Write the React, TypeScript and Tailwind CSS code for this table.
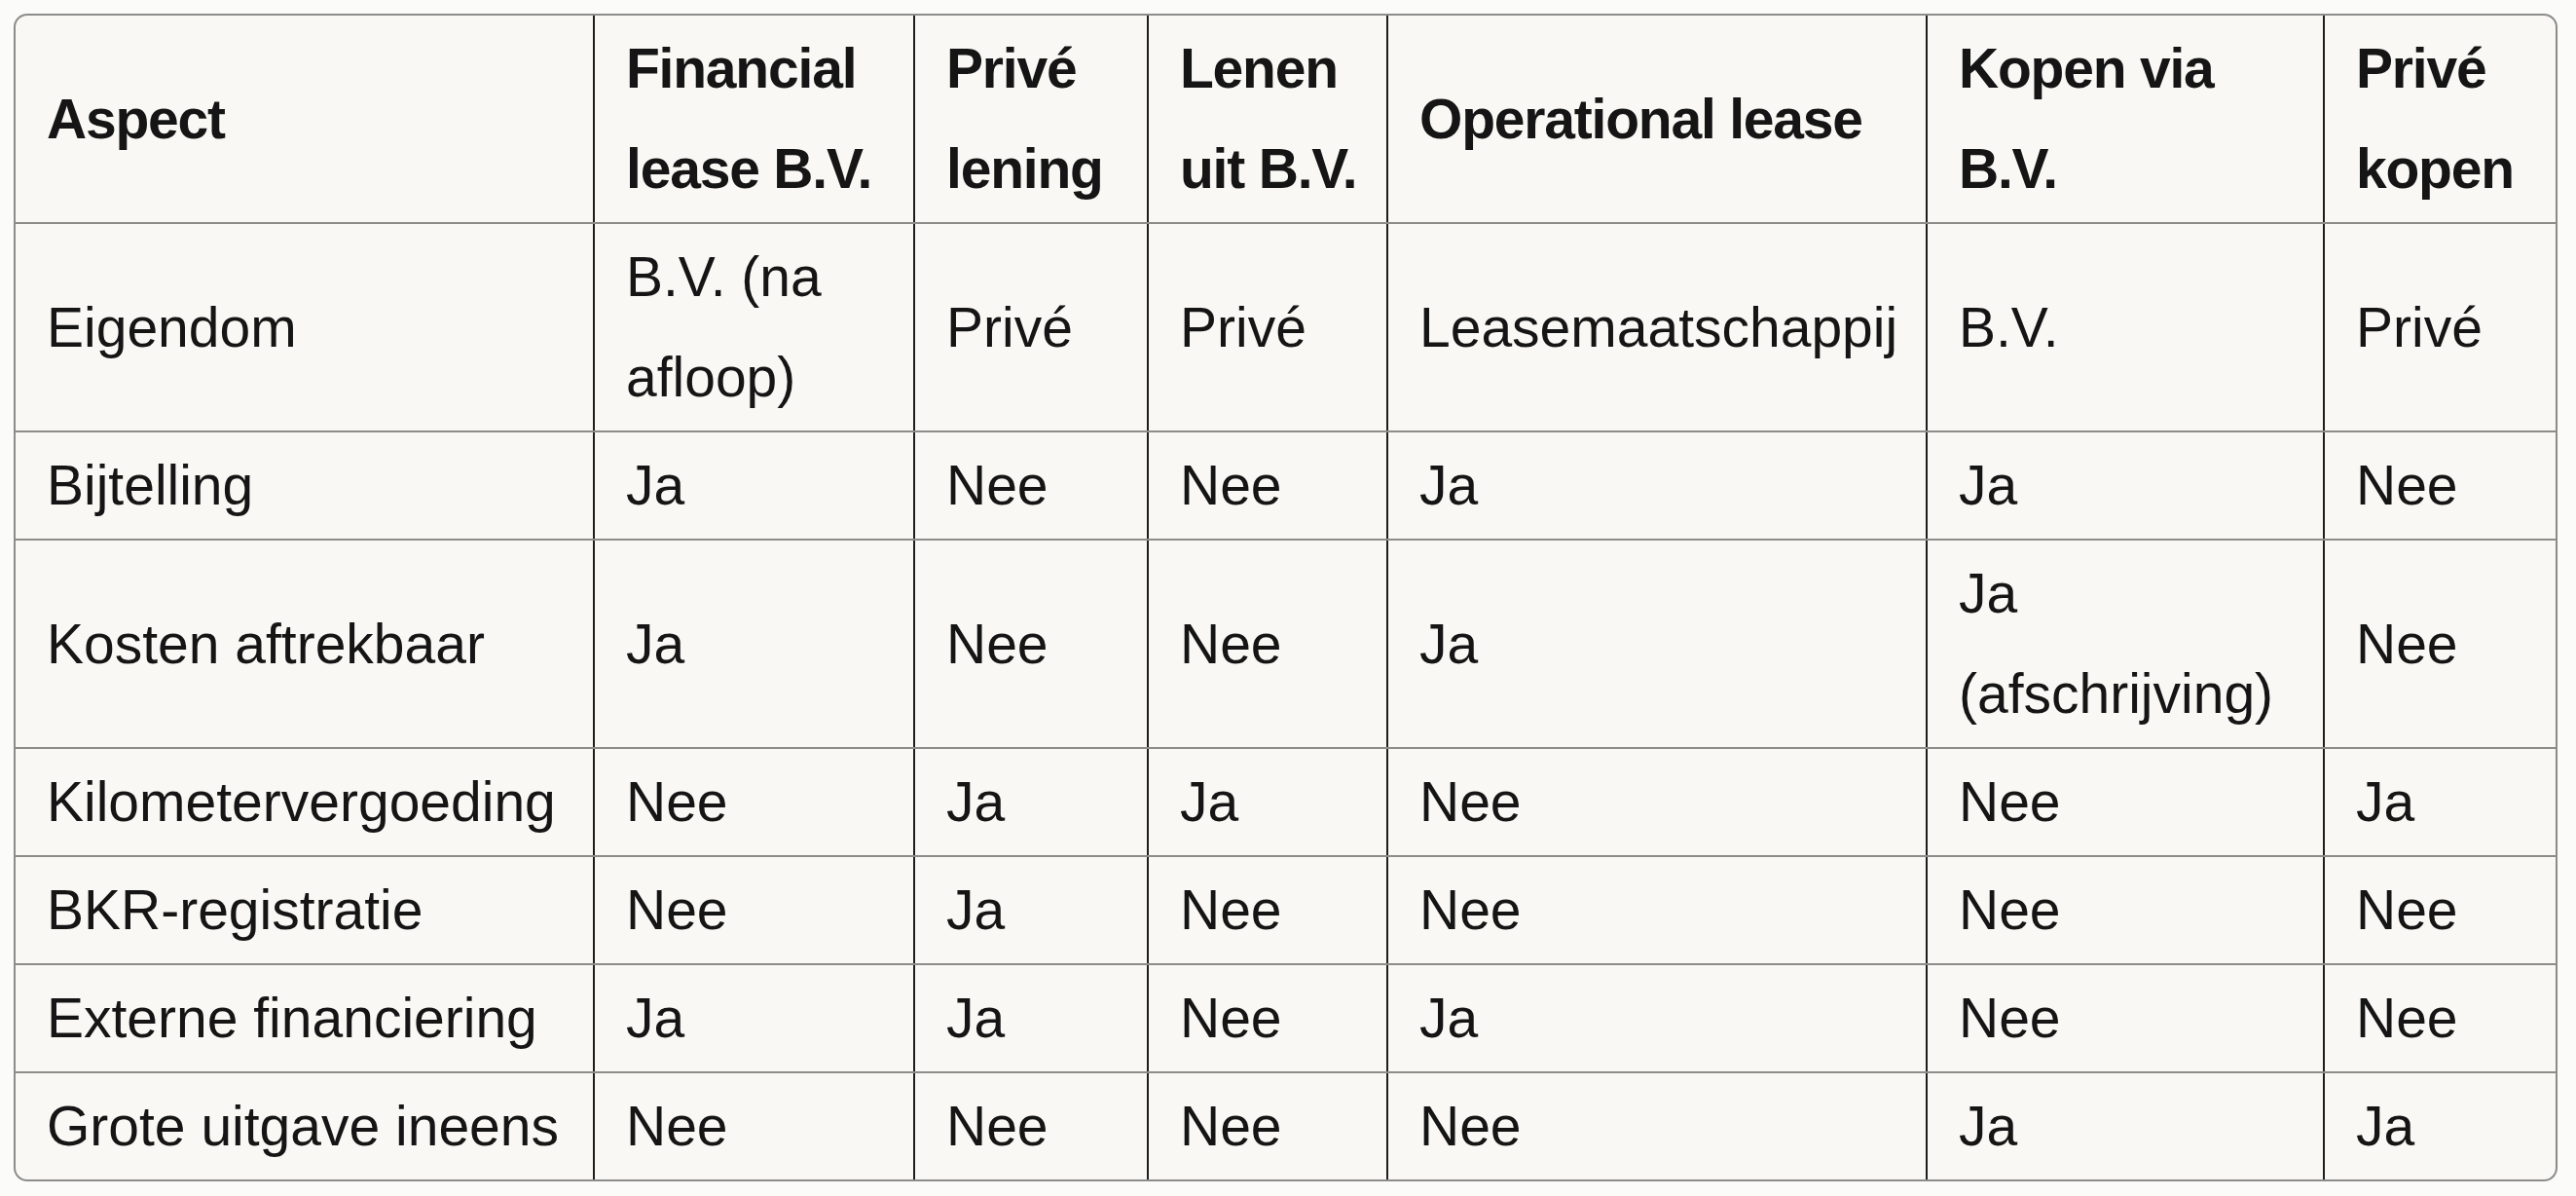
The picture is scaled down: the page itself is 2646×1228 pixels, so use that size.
import React from "react";

const headers: string[][] = [
  ["Aspect"],
  ["Financial", "lease B.V."],
  ["Privé", "lening"],
  ["Lenen", "uit B.V."],
  ["Operational lease"],
  ["Kopen via", "B.V."],
  ["Privé", "kopen"],
];

const widths = [594, 329, 240, 246, 554, 408, 238];

const rows: string[][] = [
  ["Eigendom", "B.V. (na afloop)", "Privé", "Privé", "Leasemaatschappij", "B.V.", "Privé"],
  ["Bijtelling", "Ja", "Nee", "Nee", "Ja", "Ja", "Nee"],
  ["Kosten aftrekbaar", "Ja", "Nee", "Nee", "Ja", "Ja (afschrijving)", "Nee"],
  ["Kilometervergoeding", "Nee", "Ja", "Ja", "Nee", "Nee", "Ja"],
  ["BKR-registratie", "Nee", "Ja", "Nee", "Nee", "Nee", "Nee"],
  ["Externe financiering", "Ja", "Ja", "Nee", "Ja", "Nee", "Nee"],
  ["Grote uitgave ineens", "Nee", "Nee", "Nee", "Nee", "Ja", "Ja"],
];

const App = () => {
  return (
    <div className="min-h-screen bg-[#fbfbf9] pt-[14px] pl-[14px] text-[#151515] [font-family:'Liberation_Sans',Arial,sans-serif]">
      <div className="w-[2613px] overflow-hidden rounded-[14px] border-2 border-[#8c8c89] bg-[#f9f8f4]">
        <table className="w-full table-fixed border-collapse text-[57px] leading-[103px]">
          <colgroup>
            {widths.map((w, i) => (
              <col key={i} style={{ width: w }} />
            ))}
          </colgroup>
          <thead>
            <tr>
              {headers.map((h, i) => (
                <th
                  key={i}
                  className={`border-b-2 border-b-[#8c8c89] px-[32px] py-[3px] text-left align-middle font-bold tracking-[-1.2px] whitespace-nowrap ${
                    i < headers.length - 1 ? "border-r-2 border-r-[#1e1e1e]" : ""
                  }`}
                >
                  {h.map((line) => (
                    <div key={line}>{line}</div>
                  ))}
                </th>
              ))}
            </tr>
          </thead>
          <tbody>
            {rows.map((r, ri) => (
              <tr key={r[0]}>
                {r.map((c, ci) => (
                  <td
                    key={ci}
                    className={`px-[32px] py-[3px] text-left align-middle font-normal ${
                      ri < rows.length - 1 ? "border-b-2 border-b-[#8c8c89]" : ""
                    } ${ci < r.length - 1 ? "border-r-2 border-r-[#1e1e1e]" : ""}`}
                  >
                    {c}
                  </td>
                ))}
              </tr>
            ))}
          </tbody>
        </table>
      </div>
    </div>
  );
};

export default App;
